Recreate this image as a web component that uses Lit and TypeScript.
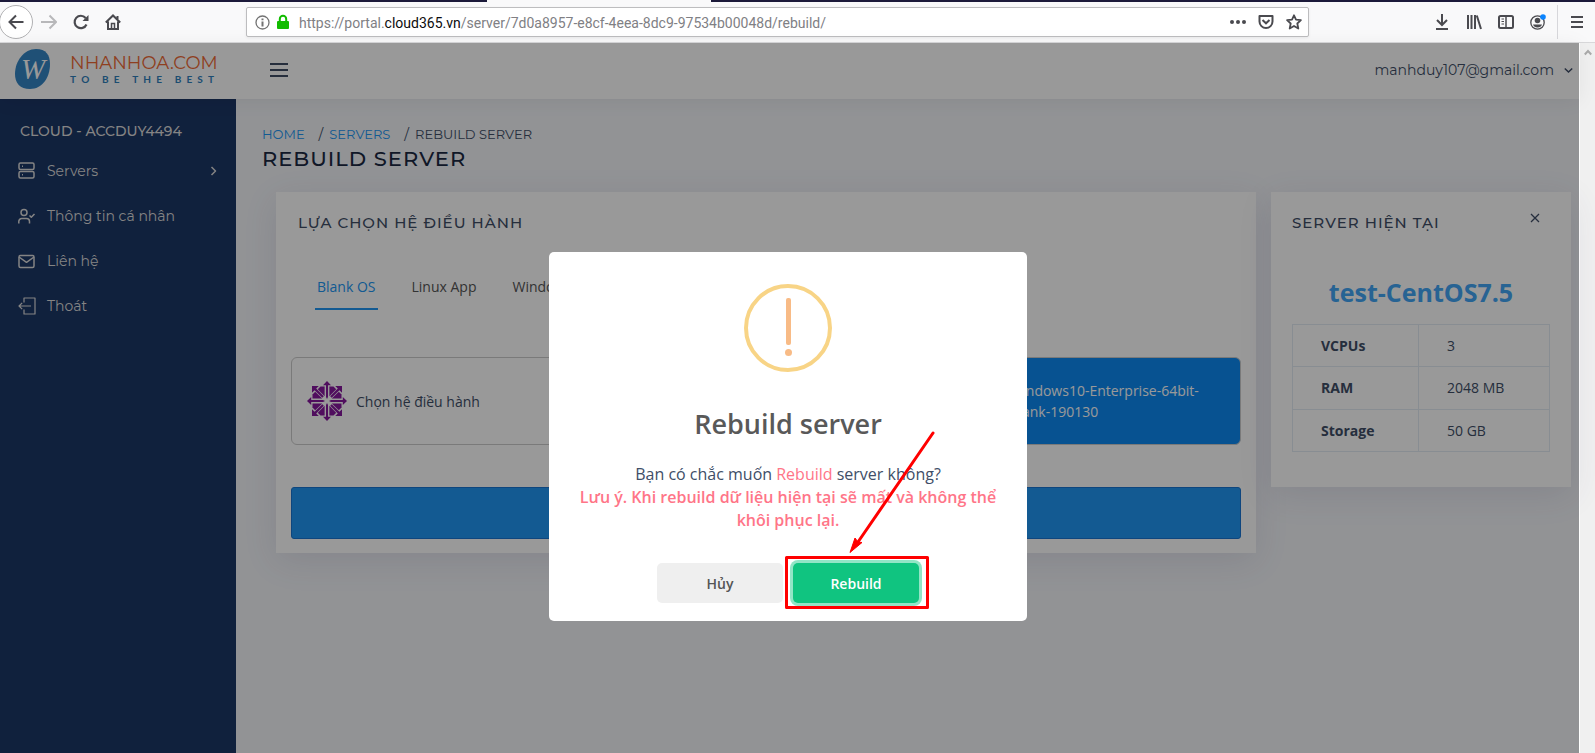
import { LitElement, html, svg, css } from "lit";
import { customElement } from "lit/decorators.js";

const centosPetals = [0, 90, 180, 270].map(
  (a) => svg`<g transform="rotate(${a} 20 20)">
    <path d="M20 0L24 4.200H21V16L20 18L19 16V4.200H16Z" />
    <path d="M17.600 5.500V15.200L10.800 8.200L13.500 5.500Z" />
    <path d="M22.400 5.500V15.200L29.200 8.200L26.500 5.500Z" />
    <path d="M5 5H11.800L9.200 7.600L16.800 15.300L15.300 16.800L7.600 9.200L5 11.800Z" />
  </g>`
);

@customElement("browser-bar")
export class BrowserBar extends LitElement {
  static styles = css`
    :host { display: block; font-family: "Open Sans", "Noto Sans", sans-serif; }
    .tabs { display: grid; grid-template-columns: 487fr 224fr 884fr; height: 2px; background: #1c1a3a; }
    .current { grid-column: 2; background: #f9f9fa; }
    .bar { display: flex; align-items: center; height: 40px; background: #f9f9fa; border-bottom: 1px solid #d8d8da; }
    button { display: flex; align-items: center; justify-content: center; width: 32px; height: 32px; padding: 0; border: 0; background: none; color: #4a4a4f; }
    .back { width: 34px; height: 34px; margin-left: -1px; flex: none; border: 1px solid #b1b1b3; border-radius: 50%; background: #fff; }
    .forward { color: #b8b8ba; }
    .address { display: flex; align-items: center; flex: 1; box-sizing: border-box; height: 30px; margin: 0 117px; padding-left: 8px; border: 1px solid #bdbdbf; border-radius: 2px; background: #fff; box-shadow: 0 1px 3px #0001; }
    .url { flex: 1; margin-left: 9px; padding-top: 1px; font: 14px/20px Roboto, sans-serif; color: #808084; white-space: nowrap; overflow: hidden; }
    .url b { color: #0c0c0d; font-weight: 400; }
    .address button { width: 28px; height: 28px; }
    .lock { margin-left: 6px; }
    .tools { display: flex; align-items: center; }
    .menu { width: 38px; height: 34px; border-left: 1px solid #d7d7db; margin-left: 3px; }
    svg { display: block; fill: none; stroke: currentColor; stroke-width: 2; }
  `;

  render() {
    return html`
      <div class="tabs"><div class="current"></div></div>
      <div class="bar">
        <button class="back" aria-label="Back"><svg width="16" height="16"><path d="M15.500 8H1.500M8 1.500L1.500 8L8 14.500" /></svg></button>
        <button class="forward" aria-label="Forward"><svg width="16" height="16"><path d="M0 8H15M8.500 1.500L15 8L8.500 14.500" /></svg></button>
        <button aria-label="Reload"><svg width="16" height="16"><path d="M13.500 10.500A6.200 6.200 0 1 1 12.600 4" stroke-width="2.200" /><path d="M15.500 1V7H9.500Z" fill="currentColor" stroke="none" /></svg></button>
        <button aria-label="Home"><svg width="16" height="16"><path d="M.8 8.500L8 1.500L15.200 8.500M3 7.500V15H13V7.500M12.500 2V5" /><path d="M6.500 15V9.500H9.500V15" stroke-width="1.500" /></svg></button>
        <div class="address">
          <svg width="15" height="15" color="#737373"><circle cx="7.500" cy="7.500" r="6.500" stroke-width="1.300" /><path d="M7.500 6.500V11.500M7.500 3.500V5.200" /></svg>
          <svg class="lock" width="14" height="16" color="#12bc00"><rect x="1" y="7" width="12" height="8" rx="1" fill="currentColor" stroke="none" /><path d="M3.800 8V5A3.200 3.200 0 0 1 10.200 5V8" /></svg>
          <span class="url">https://portal.<b>cloud365.vn</b>/server/7d0a8957-e8cf-4eea-8dc9-97534b00048d/rebuild/</span>
          <button aria-label="Page actions"><svg width="16" height="6"><g fill="currentColor" stroke="none"><circle cx="2" cy="3" r="2" /><circle cx="8" cy="3" r="2" /><circle cx="14" cy="3" r="2" /></g></svg></button>
          <button aria-label="Save to Pocket"><svg width="16" height="16"><path d="M1.500 2H14.500V7.500A6.500 6.500 0 0 1 1.500 7.500Z" stroke-linejoin="round" /><path d="M4.500 6L8 9.300L11.500 6" /></svg></button>
          <button aria-label="Bookmark"><svg width="16" height="16"><path d="M8 1.300L10 5.700L14.900 6.200L11.300 9.500L12.300 14.500L8 12L3.700 14.500L4.700 9.500L1.100 6.200L6 5.700Z" stroke-width="1.800" stroke-linejoin="round" /></svg></button>
        </div>
        <div class="tools">
          <button aria-label="Downloads"><svg width="16" height="16"><path d="M8 0V11M3 6L8 11L13 6M2 15H14" /></svg></button>
          <button aria-label="Library"><svg width="16" height="16"><path d="M2 1V15M5.500 1V15M9 1V15M10.800 1.500L15 15" /></svg></button>
          <button aria-label="Sidebars"><svg width="16" height="16"><rect x="1" y="2" width="14" height="12" rx="1.500" /><path d="M8 2V14" stroke-width="1.500" /><path d="M3.500 5H6M3.500 7.500H6M3.500 10H6" stroke-width="1" /></svg></button>
          <button aria-label="Account"><svg width="16" height="16"><circle cx="7.500" cy="8.500" r="6.700" stroke-width="1.300" /><circle cx="7.500" cy="6.500" r="2.800" fill="currentColor" stroke="none" /><path d="M3 10.500H12Q11 13.500 7.500 13.500Q4 13.500 3 10.500Z" fill="currentColor" stroke="none" /><circle cx="13" cy="3" r="2.800" fill="#0a84ff" stroke="none" /></svg></button>
          <button class="menu" aria-label="Menu"><svg width="12" height="12"><path d="M0 1H12M0 6H12M0 11H12" /></svg></button>
        </div>
      </div>
    `;
  }
}

@customElement("portal-nav")
export class PortalNav extends LitElement {
  static styles = css`
    :host { display: block; background: #1c3766; color: #dcdcdc; font-family: Montserrat, Inter, sans-serif; }
    h2 { margin: 0; padding: 22px 20px 0; font-size: 14px; line-height: 20px; font-weight: 500; }
    nav { display: flex; flex-direction: column; gap: 5px; padding-top: 10px; }
    a { display: flex; align-items: center; gap: 11px; height: 40px; padding: 0 18px; color: inherit; font-size: 14px; font-weight: 400; text-decoration: none; }
    .more { margin-left: auto; }
    svg { display: block; flex: none; fill: none; stroke: currentColor; stroke-width: 1.500; stroke-linejoin: round; }
  `;

  private items = [
    { label: "Servers", more: true, icon: svg`<rect x="1" y="1" width="15" height="6.500" rx="1.500" /><rect x="1" y="9.500" width="15" height="6.500" rx="1.500" /><path d="M4 4.200H5M4 12.800H5" />` },
    { label: "Thông tin cá nhân", icon: svg`<circle cx="6" cy="5.500" r="3" /><path d="M.8 16.500V14.500A3 3 0 0 1 3.800 11.500H8.500A3 3 0 0 1 11.500 14.500V16.500M11.500 8.500L13.300 10.300L16.500 7" />` },
    { label: "Liên hệ", icon: svg`<rect x="1" y="3.500" width="15" height="12" rx="1.500" /><path d="M1 5L8.500 10.300L16 5" />` },
    { label: "Thoát", icon: svg`<path d="M6 5.500V1H17V17H6V12.500M13 9H1M4.200 5.800L1 9L4.200 12.200" stroke-width="1.200" />` },
  ];

  render() {
    return html`
      <h2>CLOUD - ACCDUY4494</h2>
      <nav>
        ${this.items.map(
          (item) => html`<a href="#">
            <svg width="18" height="18">${item.icon}</svg>${item.label}
            ${item.more ? html`<svg class="more" width="9" height="10"><path d="M2.500 1L6.500 5L2.500 9" /></svg>` : ""}
          </a>`
        )}
      </nav>
    `;
  }
}

@customElement("rebuild-dialog")
export class RebuildDialog extends LitElement {
  static styles = css`
    :host { display: block; font-family: "Open Sans", sans-serif; }
    .box { position: relative; box-sizing: border-box; width: 478px; max-width: 100%; padding: 32px 20px 18px; border-radius: 5px; background: #fff; text-align: center; }
    .icon { display: block; margin: 0 auto; }
    h2 { margin: 34px 0 0; font-size: 27px; line-height: 36px; font-weight: 600; color: #595959; }
    p { margin: 21px 0 0; padding: 0 10px; font-size: 16px; line-height: 23px; color: #404e67; }
    em { font-style: normal; color: #ff7588; }
    strong { font-weight: 600; color: #ff7588; }
    .actions { display: flex; justify-content: center; gap: 10px; margin-top: 31px; }
    button { width: 126px; height: 40px; padding: 0; border: 0; border-radius: 5px; font: 600 14px "Open Sans", sans-serif; background: #efefef; color: #555; }
    .confirm { background: #10c480; color: #fff; box-shadow: 0 0 0 3px #92e5c6; }
    .marks { position: absolute; left: 235px; top: 178px; pointer-events: none; }
  `;

  render() {
    return html`
      <section class="box" role="dialog" aria-modal="true" aria-labelledby="title">
        <svg class="icon" width="88" height="88">
          <circle cx="44" cy="44" r="42" fill="none" stroke="#f8d486" stroke-width="4" />
          <rect x="42" y="14" width="5" height="47" rx="2" fill="#f8bb86" />
          <circle cx="44.500" cy="68.500" r="3.500" fill="#f8bb86" />
        </svg>
        <h2 id="title">Rebuild server</h2>
        <p>Bạn có chắc muốn <em>Rebuild</em> server không?<br /><strong>Lưu ý. Khi rebuild dữ liệu hiện tại sẽ mất và không thể khôi phục lại.</strong></p>
        <div class="actions"><button>Hủy</button><button class="confirm">Rebuild</button></div>
        <svg class="marks" width="152" height="182">
          <rect x="2.500" y="127.500" width="141" height="50" fill="none" stroke="#f00" stroke-width="3" stroke-linejoin="round" />
          <path d="M149 3L74 112" stroke="#f00" stroke-width="3" stroke-linecap="round" />
          <path d="M66 122.500L71 108L74 112L78 112.500Z" fill="#f00" stroke="#f00" />
        </svg>
      </section>
    `;
  }
}

@customElement("app-root")
export class AppRoot extends LitElement {
  static styles = css`
    :host { display: flex; flex-direction: column; min-height: 100vh; font-family: "Open Sans", sans-serif; font-size: 14px; color: #404e67; }
    .view { display: flex; flex: 1; }
    .page { position: relative; display: flex; flex-direction: column; flex: 1; min-width: 0; background: #f3f5f9; }
    .top { display: flex; align-items: center; box-sizing: border-box; height: 56px; padding-bottom: 2px; background: #fff; box-shadow: 0 2px 20px #00000010; z-index: 1; font-family: Montserrat, Inter, sans-serif; }
    .logo { display: flex; align-items: flex-start; gap: 19px; width: 236px; padding-left: 15px; box-sizing: border-box; }
    .logo svg { margin-top: -2px; }
    .brand { display: flex; flex-direction: column; gap: 1px; width: 144px; padding-top: 3px; }
    .name { font: 18px/20px Montserrat, sans-serif; color: #ee6a36; white-space: nowrap; }
    .motto { display: flex; justify-content: space-between; font: 700 10px/10px Lato, sans-serif; color: #2f80bd; }
    .icon-button { display: flex; margin: 0 0 0 34px; padding: 0; border: 0; background: none; color: #404e67; }
    .icon-button svg { stroke-width: 2; }
    .account { display: flex; align-items: center; gap: 10px; margin-left: auto; padding-right: 6px; border: 0; background: none; font: 14px/20px Montserrat, Inter, sans-serif; color: #404e67; }
    .body { display: flex; flex: 1; }
    portal-nav { width: 236px; flex: none; }
    main { flex: 1; min-width: 0; padding: 26px 8px 0 26px; }
    .crumbs { display: flex; font: 13px/18px Montserrat, Inter, sans-serif; color: #404e67; }
    .crumbs a { color: #2196f3; text-decoration: none; }
    .crumbs span::before { content: "/"; margin: 0 6px 0 14px; font-size: 14px; }
    h1 { margin: 4px 0 0; font: 500 21px/24px Montserrat, Inter, sans-serif; letter-spacing: 1px; color: #1b2942; }
    .cards { display: grid; grid-template-columns: 980fr 300fr; gap: 15px; align-items: start; margin: 21px 0 0 14px; }
    .card { box-sizing: border-box; background: #fff; box-shadow: 0 8px 32px #3e396b1c; }
    .card h2 { margin: 0; font: 500 15px/20px Montserrat, Inter, sans-serif; letter-spacing: 1px; }
    .choose { padding: 21px 15px 14px; }
    .choose h2 { padding-left: 7px; }
    .tabs { display: flex; gap: 32px; margin: 32px 0 0 24px; }
    .tabs button { height: 45px; padding: 0 2px; border: 0; border-bottom: 2px solid transparent; background: none; font: inherit; color: #555; white-space: nowrap; }
    .tabs .on { border-color: #2196f3; color: #2196f3; }
    .images { display: grid; grid-template-columns: repeat(3, 1fr); gap: 30px; margin-top: 47px; }
    .image { display: flex; align-items: center; gap: 9px; height: 88px; padding: 0 15px; border: 1px solid #cbcbcb; border-radius: 6px; background: none; font: 14px/21px "Open Sans", sans-serif; color: #404e67; text-align: left; }
    .image svg { flex: none; }
    .picked { grid-column: 3; background: #0c89f2; color: #fff; }
    .submit { display: block; width: 100%; height: 52px; margin-top: 42px; border: 1px solid #1976d2; border-radius: 3px; background: #2196f3; }
    .current { padding: 21px 21px 35px; }
    .head { display: flex; justify-content: space-between; align-items: flex-start; }
    .close { padding: 0; margin: 0 8px 0 0; border: 0; background: none; color: #404e67; }
    .server { margin: 41px 0 0; font-size: 25px; line-height: 36px; font-weight: 700; text-align: center; color: #42a5f5; white-space: nowrap; }
    table { width: 100%; height: 128px; margin-top: 14px; border-collapse: collapse; }
    th, td { padding: 0 0 0 28px; border: 1px solid #e3ebf3; text-align: left; }
    th { width: 97px; font-weight: 700; }
    svg { display: block; fill: none; stroke: currentColor; stroke-width: 1.500; }
    .centos { fill: #85189d; stroke: none; }
    .shade { position: absolute; inset: 0; z-index: 2; display: flex; justify-content: center; align-items: flex-start; padding: 209px 3px 0 0; background: #0006; }
    .scroll { width: 16px; flex: none; box-sizing: border-box; padding: 6px 0 0 4px; background: #f0f0f0; color: #aaa; border-left: 1px solid #fff; }
  `;

  render() {
    return html`
      <browser-bar></browser-bar>
      <div class="view">
        <div class="page">
          <header class="top">
            <div class="logo">
              <svg width="36" height="42" viewBox="0 0 36 42">
                <path d="M21 1C31 1 35 7 35 16C35 30 27 41 15 41C5 41 0 35 0 26C0 13 9 1 21 1Z" fill="#3486c5" stroke="none" />
                <text x="18" y="31" fill="#fff" stroke="none" font-family="Liberation Serif, serif" font-size="29" font-style="italic" text-anchor="middle">W</text>
              </svg>
              <div class="brand">
                <span class="name">NHANHOA.COM</span>
                <span class="motto">${[..."TO BE THE BEST"].map((c) => html`<span>${c === " " ? "\u00a0" : c}</span>`)}</span>
              </div>
            </div>
            <button class="icon-button" aria-label="Toggle menu"><svg width="18" height="14"><path d="M0 1H18M0 7H18M0 13H18" /></svg></button>
            <button class="account">manhduy107@gmail.com<svg width="9" height="7"><path d="M.8 1.500L4.500 5L8.200 1.500" /></svg></button>
          </header>
          <div class="body">
            <portal-nav></portal-nav>
            <main>
              <div class="crumbs"><a href="#">HOME</a><span><a href="#">SERVERS</a></span><span>REBUILD SERVER</span></div>
              <h1>REBUILD SERVER</h1>
              <div class="cards">
                <section class="card choose">
                  <h2>LỰA CHỌN HỆ ĐIỀU HÀNH</h2>
                  <div class="tabs"><button class="on">Blank OS</button><button>Linux App</button><button>Windows App</button></div>
                  <div class="images">
                    <button class="image"><svg class="centos" width="40" height="40" viewBox="0 0 40 40">${centosPetals}</svg>Chọn hệ điều hành</button>
                    <button class="image picked"><svg width="40" height="40"></svg>Windows10-Enterprise-64bit-Blank-190130</button>
                  </div>
                  <button class="submit" aria-label="Rebuild"></button>
                </section>
                <section class="card current">
                  <div class="head">
                    <h2>SERVER HIỆN TẠI</h2>
                    <button class="close" aria-label="Close"><svg width="13" height="13"><path d="M2 1L10 9M10 1L2 9" stroke-width="1.300" /></svg></button>
                  </div>
                  <p class="server">test-CentOS7.5</p>
                  <table>
                    <tr><th>VCPUs</th><td>3</td></tr>
                    <tr><th>RAM</th><td>2048 MB</td></tr>
                    <tr><th>Storage</th><td>50 GB</td></tr>
                  </table>
                </section>
              </div>
            </main>
          </div>
          <div class="shade"><rebuild-dialog></rebuild-dialog></div>
        </div>
        <div class="scroll"><svg width="8" height="7"><path d="M.8 5.500L4 2L7.200 5.500" stroke-width="2" /></svg></div>
      </div>
    `;
  }
}
